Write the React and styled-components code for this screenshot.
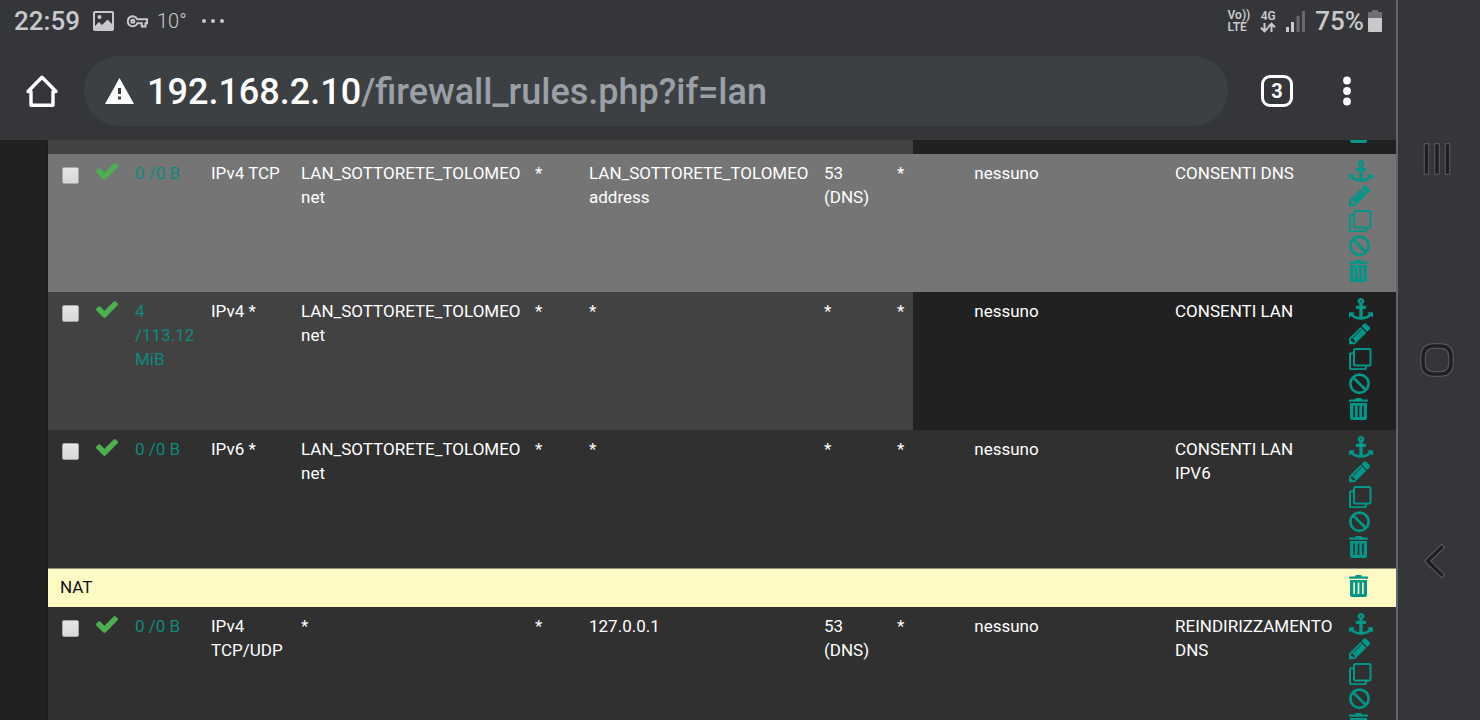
import React from "react";
import styled, { createGlobalStyle } from "styled-components";

const TEAL = "#009688";

const Global = createGlobalStyle`
  * { box-sizing: border-box; }
  body { margin: 0; background: #212121; font-family: Roboto, "Liberation Sans", sans-serif; }
  button { border: 0; padding: 0; background: none; color: inherit; font: inherit; cursor: pointer; }
  svg { display: block; }
`;

const Screen = styled.div`
  display: grid;
  grid-template-columns: minmax(0, 1fr) 84px;
  height: 100vh;
  overflow: hidden;
`;

const Browser = styled.div`
  display: flex;
  flex-direction: column;
  min-height: 0;
`;

const Chrome = styled.header`
  flex: none;
  background: #35363a;
`;

const StatusBar = styled.div`
  display: flex;
  align-items: center;
  justify-content: space-between;
  height: 42px;
  padding: 0 14px;
  color: #c8c9cb;
`;

const StatusGroup = styled.div`
  display: flex;
  align-items: center;
  gap: ${(p) => p.$gap}px;
`;

const StatusText = styled.span`
  font-size: 26px;
  line-height: 30px;
  font-weight: 500;
`;

const Temperature = styled.span`
  margin-left: -4px;
  font-size: 20px;
  line-height: 30px;
  font-weight: 300;
`;

const Stacked = styled.span`
  display: flex;
  flex-direction: column;
  align-items: ${(p) => p.$align || "flex-start"};
  font-size: 12px;
  line-height: 12px;
  font-weight: 600;
`;

const Percent = styled.div`
  display: flex;
  align-items: center;
  gap: 4px;
`;

const Toolbar = styled.div`
  display: flex;
  align-items: center;
  height: 98px;
  padding: 0 45px 0 26px;
  color: #fff;
`;

const AddressBar = styled.div`
  flex: 1;
  display: flex;
  align-items: center;
  gap: 13px;
  height: 70px;
  margin: 0 33px 0 26px;
  padding: 0 21px;
  border-radius: 35px;
  background: #3c4043;
`;

const Url = styled.button`
  flex: 1;
  padding-top: 2px;
  text-align: left;
  white-space: nowrap;
  font-size: 36px;
  line-height: 44px;
  font-weight: 500;
`;

const UrlPath = styled.span`
  color: #9aa0a6;
`;

const TabCount = styled.button`
  width: 32px;
  height: 32px;
  margin-right: 50px;
  border: 3px solid #fff;
  border-radius: 9px;
  font-size: 20px;
  line-height: 26px;
  font-weight: 700;
`;

const Page = styled.main`
  flex: 1;
  min-height: 0;
  overflow: hidden;
  padding-left: 47px;
  background: #212121;
`;

const Panel = styled.div`
  border-left: 1px solid #1b1b1b;
  background: #303030;
`;

const Rules = styled.table`
  width: 100%;
  table-layout: fixed;
  border-collapse: separate;
  border-spacing: 0;
  color: #fff;
  font-size: 17px;
  line-height: 24px;
`;

const Col = styled.col`
  width: ${(p) => (p.$w ? `${p.$w}px` : "auto")};
`;

const tones = {
  selected: ["#757575", "#757575"],
  hover: ["#424242", "#212121"],
  plain: ["#303030", "#303030"],
};

const Cell = styled.td`
  padding: 7px 0 0 12px;
  vertical-align: top;
  text-align: left;
`;

const TickCell = styled(Cell)`
  padding-left: 14px;
`;

const QueueCell = styled(Cell)`
  padding-left: 0;
  text-align: center;
`;

const ActionsCell = styled(Cell)`
  padding: 6px 0 0 6px;
`;

const EdgeCell = styled.td`
  padding: 0;
`;

const Row = styled.tr`
  height: ${(p) => p.$height || 138}px;
  > td { background: ${(p) => tones[p.$tone][0]}; }
  > td:nth-child(n + 10) { background: ${(p) => tones[p.$tone][1]}; }
`;

const Separator = styled.tr`
  height: 39px;
  background: #fff9c4;
  color: #111;
  > td { padding-top: 6px; border-top: 1px solid #8f8c78; }
`;

const Tick = styled.input`
  appearance: none;
  display: block;
  width: 17px;
  height: 17px;
  margin: 6px 0 0;
  border: 1px solid #a8a8a8;
  border-radius: 2px;
  background: linear-gradient(#e6e6e6, #d8d8d8);
`;

const Pass = styled.svg`
  width: 22px;
  height: 17px;
  margin-top: 2px;
  fill: #4caf50;
`;

const StateLink = styled.a`
  color: #0c8a7e;
  text-decoration: none;
`;

const Actions = styled.div`
  display: flex;
  flex-direction: column;
  gap: 3px;
  color: ${TEAL};
`;

const CutActions = styled.div`
  display: flex;
  align-items: flex-end;
  height: 14px;
  padding: 0 0 11px 6px;
  overflow: hidden;
  color: ${TEAL};
`;

const ActionButton = styled.button`
  flex: none;
  width: 24px;
  height: 22px;
`;

const NavBar = styled.nav`
  display: flex;
  flex-direction: column;
  align-items: center;
  justify-content: space-around;
  padding: 58px 5px 58px 0;
  border-left: 2px solid #636467;
  background: #35363a;
`;

const glyphs = {
  anchor: (
    <path
      transform="scale(.0134 .0123)"
      d="M960 256q0-26-19-45t-45-19-45 19-19 45 19 45 45 19 45-19 19-45zm832 928v352q0 22-20 30-8 2-12 2-13 0-23-9l-93-93q-119 143-318.500 226.500t-429.500 83.500-429.500-83.500-318.500-226.500l-93 93q-9 9-23 9-4 0-12-2-20-8-20-30v-352q0-14 9-23t23-9h352q22 0 30 20 8 19-7 35l-100 100q67 91 189.500 153.500t271.500 82.500v-647h-192q-26 0-45-19t-19-45v-128q0-26 19-45t45-19h192v-163q-58-34-93-92.500t-35-128.500q0-106 75-181t181-75 181 75 75 181q0 70-35 128.500t-93 92.500v163h192q26 0 45 19t19 45v128q0 26-19 45t-45 19h-192v647q149-20 271.500-82.500t189.500-153.500l-100-100q-15-16-7-35 8-20 30-20h352q14 0 23 9t9 23z"
    />
  ),
  pencil: (
    <path
      transform="translate(-1.8 -1.8) scale(.0139)"
      d="M491 1536l91-91-235-235-91 91v107h128v128h107zm523-928q0-22-22-22-10 0-17 7l-542 542q-7 7-7 17 0 22 22 22 10 0 17-7l542-542q7-7 7-17zm-54-192l416 416-832 832h-416v-416zm683 96q0 53-37 90l-166 166-416-416 166-165q36-38 90-38 53 0 91 38l235 234q37 39 37 91z"
    />
  ),
  copy: (
    <g fill="none" stroke="currentColor" strokeWidth="2">
      <rect x="5" y="1" width="16.500" height="16.500" rx="1.200" />
      <path d="M5 5.200H2.200Q1 5.200 1 6.400V20Q1 21.200 2.200 21.200H15.800Q17 21.200 17 20V17.500" />
    </g>
  ),
  ban: (
    <g fill="none" stroke="currentColor" strokeWidth="2.700">
      <circle cx="10.500" cy="10.700" r="9.100" />
      <path d="M4 4.200L17 17.200" />
    </g>
  ),
  trash: (
    <path
      fillRule="evenodd"
      d="M6 1.400Q6.300 0 7.500 0H11.500Q12.700 0 13 1.400H18.300Q19 1.400 19 2.200V3Q19 3.800 18.300 3.800H.7Q0 3.800 0 3V2.200Q0 1.400 .7 1.400ZM1 5H18V19.700Q18 22 16 22H3Q1 22 1 19.700ZM4.300 7.500V19H5.900V7.500ZM8.700 7.500V19H10.300V7.500ZM13.100 7.500V19H14.700V7.500Z"
    />
  ),
};

const actionLabels = {
  anchor: "Sposta",
  pencil: "Modifica",
  copy: "Copia",
  ban: "Disabilita",
  trash: "Elimina",
};

function Action({ name }) {
  return (
    <ActionButton type="button" aria-label={actionLabels[name]}>
      <svg width="24" height="22" viewBox="0 0 24 22" fill="currentColor">
        {glyphs[name]}
      </svg>
    </ActionButton>
  );
}

function Lines({ text }) {
  return text.split("\n").map((line, i) => (
    <React.Fragment key={i}>
      {i > 0 && <br />}
      {line}
    </React.Fragment>
  ));
}

const columns = [36, 39, 76, 90, 234, 54, 235, 73, 28, 0, 63, 180, 53];

const NET = "LAN_SOTTORETE_TOLOMEO\nnet";

const rules = [
  { tone: "selected", state: "0 /0 B", cells: ["IPv4 TCP", NET, "*", "LAN_SOTTORETE_TOLOMEO\naddress", "53\n(DNS)", "*"], description: "CONSENTI DNS" },
  { tone: "hover", state: "4\n/113.12\nMiB", cells: ["IPv4 *", NET, "*", "*", "*", "*"], description: "CONSENTI LAN" },
  { tone: "plain", state: "0 /0 B", cells: ["IPv6 *", NET, "*", "*", "*", "*"], description: "CONSENTI LAN\nIPV6" },
  { separator: "NAT" },
  { tone: "plain", state: "0 /0 B", cells: ["IPv4\nTCP/UDP", "*", "*", "127.0.0.1", "53\n(DNS)", "*"], description: "REINDIRIZZAMENTO\nDNS" },
];

function Rule({ rule }) {
  return (
    <Row $tone={rule.tone}>
      <TickCell>
        <Tick type="checkbox" aria-label={rule.description.replace("\n", " ")} />
      </TickCell>
      <Cell>
        <Pass viewBox="121 334 1550 1188" preserveAspectRatio="none">
          <path d="M1671 566q0 40-28 68l-724 724-136 136q-28 28-68 28t-68-28l-136-136-362-362q-28-28-28-68t28-68l136-136q28-28 68-28t68 28l294 295 656-657q28-28 68-28t68 28l136 136q28 28 28 68z" />
        </Pass>
      </Cell>
      <Cell>
        <StateLink href="#states">
          <Lines text={rule.state} />
        </StateLink>
      </Cell>
      {rule.cells.map((text, i) => (
        <Cell key={i}>
          <Lines text={text} />
        </Cell>
      ))}
      <QueueCell>nessuno</QueueCell>
      <Cell />
      <Cell>
        <Lines text={rule.description} />
      </Cell>
      <ActionsCell>
        <Actions>
          {Object.keys(glyphs).map((name) => (
            <Action key={name} name={name} />
          ))}
        </Actions>
      </ActionsCell>
    </Row>
  );
}

function RulesTable() {
  return (
    <Rules>
      <colgroup>
        {columns.map((w, i) => (
          <Col key={i} $w={w} />
        ))}
      </colgroup>
      <tbody>
        <Row $tone="hover" $height={14}>
          {columns.slice(1).map((_, i) => (
            <EdgeCell key={i} />
          ))}
          <EdgeCell>
            <CutActions>
              <Action name="trash" />
            </CutActions>
          </EdgeCell>
        </Row>
        {rules.map((rule, i) =>
          rule.separator ? (
            <Separator key={i}>
              <Cell colSpan={12}>{rule.separator}</Cell>
              <ActionsCell>
                <Actions>
                  <Action name="trash" />
                </Actions>
              </ActionsCell>
            </Separator>
          ) : (
            <Rule key={i} rule={rule} />
          )
        )}
      </tbody>
    </Rules>
  );
}

function PhoneStatus() {
  return (
    <StatusBar>
      <StatusGroup $gap={13}>
        <StatusText>22:59</StatusText>
        <svg width="21" height="20" viewBox="0 0 21 20">
          <rect x="1" y="1" width="19" height="18" rx="1" fill="none" stroke="currentColor" strokeWidth="2" />
          <circle cx="6.500" cy="6" r="2" fill="currentColor" />
          <path d="M2 15L6 11L9 14L14.500 8.500L19 13V19H2Z" fill="currentColor" />
        </svg>
        <svg width="21" height="13" viewBox="0 0 21 13" fill="none" stroke="currentColor" strokeWidth="2">
          <path d="M10.300 4.300H20V8.300H18.500V11.500H14.800V8.300H10.300A5 5 0 1 1 10.300 4.300Z" />
          <circle cx="5.800" cy="6.300" r="1.500" />
        </svg>
        <Temperature>10°</Temperature>
        <svg width="24" height="4" viewBox="0 0 24 4" fill="currentColor">
          <circle cx="4" cy="2" r="2" />
          <circle cx="13" cy="2" r="2" />
          <circle cx="22" cy="2" r="2" />
        </svg>
      </StatusGroup>
      <StatusGroup $gap={10}>
        <Stacked>
          <span>Vo))</span>
          <span>LTE</span>
        </Stacked>
        <Stacked $align="center">
          <span>4G</span>
          <svg width="16" height="11" viewBox="0 0 16 11" fill="none" stroke="currentColor" strokeWidth="2">
            <path d="M4.500 1V9M1 5.800L4.500 9.300L8 5.800M11.500 10V2M8 5.200L11.500 1.700L15 5.200" />
          </svg>
        </Stacked>
        <svg width="19" height="21" viewBox="0 0 19 21" fill="currentColor">
          <rect x="0" y="16" width="3" height="5" />
          <rect x="5" y="11" width="3" height="10" />
          <rect x="10.500" y="5" width="3" height="16" opacity=".35" />
          <rect x="16" y="0" width="3" height="21" opacity=".35" />
        </svg>
        <Percent>
          <StatusText>75%</StatusText>
          <svg width="14" height="22" viewBox="0 0 14 22" fill="currentColor">
            <path d="M4 0H10V2H13Q14 2 14 3V8H0V3Q0 2 1 2H4Z" opacity=".4" />
            <path d="M0 8H14V21Q14 22 13 22H1Q0 22 0 21Z" />
          </svg>
        </Percent>
      </StatusGroup>
    </StatusBar>
  );
}

function NavIcon({ d }) {
  return (
    <svg width="34" height="34" viewBox="0 0 34 34" fill="none" strokeLinejoin="round" strokeLinecap="square">
      <path d={d} stroke="#5d5e61" strokeWidth="5.500" />
      <path d={d} stroke="#1e1f22" strokeWidth="3.500" />
    </svg>
  );
}

export default function App() {
  return (
    <>
      <Global />
      <Screen>
        <Browser>
          <Chrome>
            <PhoneStatus />
            <Toolbar>
              <button type="button" aria-label="Home">
                <svg width="32" height="32" viewBox="0 0 32 32" fill="none" stroke="currentColor" strokeWidth="3.400" strokeLinejoin="round">
                  <path d="M2 16.500L16 2.200L30 16.500H27V30.300H5V16.500Z" />
                </svg>
              </button>
              <AddressBar>
                <svg width="29" height="26" viewBox="0 0 29 26">
                  <path d="M14.500 0L29 26H0Z" fill="#fff" />
                  <path d="M13 10H16V16H13ZM13 18.500H16V21.500H13Z" fill="#3c4043" />
                </svg>
                <Url type="button">
                  192.168.2.10<UrlPath>/firewall_rules.php?if=lan</UrlPath>
                </Url>
              </AddressBar>
              <TabCount type="button">3</TabCount>
              <button type="button" aria-label="Menu">
                <svg width="8" height="30" viewBox="0 0 8 30" fill="currentColor">
                  <circle cx="4" cy="4.500" r="3.900" />
                  <circle cx="4" cy="15" r="3.900" />
                  <circle cx="4" cy="25.500" r="3.900" />
                </svg>
              </button>
            </Toolbar>
          </Chrome>
          <Page>
            <Panel>
              <RulesTable />
            </Panel>
          </Page>
        </Browser>
        <NavBar>
          <button type="button" aria-label="Recenti">
            <NavIcon d="M6.500 4V30M17 4V30M27.500 4V30" />
          </button>
          <button type="button" aria-label="Schermata iniziale">
            <NavIcon d="M14 3H20Q31 3 31 14V20Q31 31 20 31H14Q3 31 3 20V14Q3 3 14 3Z" />
          </button>
          <button type="button" aria-label="Indietro">
            <NavIcon d="M21.500 3.500L7.500 17L21.500 30.500" />
          </button>
        </NavBar>
      </Screen>
    </>
  );
}
